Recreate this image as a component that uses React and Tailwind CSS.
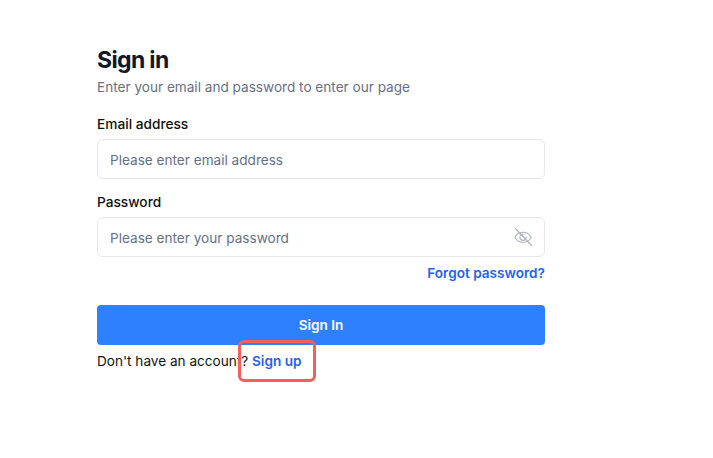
import React from "react";

export default function App() {
  return (
    <div className="relative w-[713px] h-[458px] bg-white overflow-hidden font-['Inter',sans-serif] pl-[97px] pt-[45px]">
      <div className="w-[448px] flex flex-col">
        <h1 className="text-[23px] leading-[30px] font-bold text-[#111827] tracking-[-0.65px]">Sign in</h1>
        <p className="mt-[2px] text-[13.6px] leading-5 text-[#667085]">Enter your email and password to enter our page</p>
        <label className="mt-[17px] text-[13.7px] leading-5 font-medium text-[#111111]">Email address</label>
        <div className="mt-[5px] h-10 rounded-md border border-[#e4e7ee] bg-white px-3 pt-[2px] flex items-center text-[13.6px] text-[#667085]">
          Please enter email address
        </div>
        <label className="mt-[13px] text-[13.7px] leading-5 font-medium text-[#111111]">Password</label>
        <div className="mt-[5px] h-10 rounded-md border border-[#e4e7ee] bg-white pl-3 pr-[11px] pt-[2px] flex items-center justify-between text-[13.6px] text-[#667085]">
          <span>Please enter your password</span>
          <svg width="20" height="20" viewBox="0 0 20 20" fill="none" stroke="#aeb2ba" strokeWidth="1.1" strokeLinecap="round" className="-mt-[2px]">
            <path d="M1.8 10.5c2-3.6 4.9-5.2 8.2-5.2s6.2 1.6 8.2 5.2c-2 3.3-4.9 4.8-8.2 4.8s-6.2-1.5-8.2-4.8z" />
            <path d="M7 9a3.3 3.3 0 0 1 3-1.6M13.2 10.5a3.3 3.3 0 0 1-3.2 2.9 3.3 3.3 0 0 1-3.2-3" />
            <path d="M2.5 1.5l16 17" />
          </svg>
        </div>
        <div className="mt-[6px] flex justify-end">
          <a className="text-[13.6px] leading-5 font-semibold text-[#2563eb]">Forgot password?</a>
        </div>
        <button className="mt-[22px] h-10 rounded bg-[#2f80ff] text-white text-[13.6px] font-semibold">Sign In</button>
        <p className="mt-[6px] text-[13.6px] leading-5 text-[#111111]">
          Don't have an account? <a className="font-semibold text-[#2563eb]">Sign up</a>
        </p>
      </div>
      <div className="absolute left-[238px] top-[340px] w-[78px] h-[42px] rounded-md border-[3px] border-[#f25f5f]"></div>
    </div>
  );
}
